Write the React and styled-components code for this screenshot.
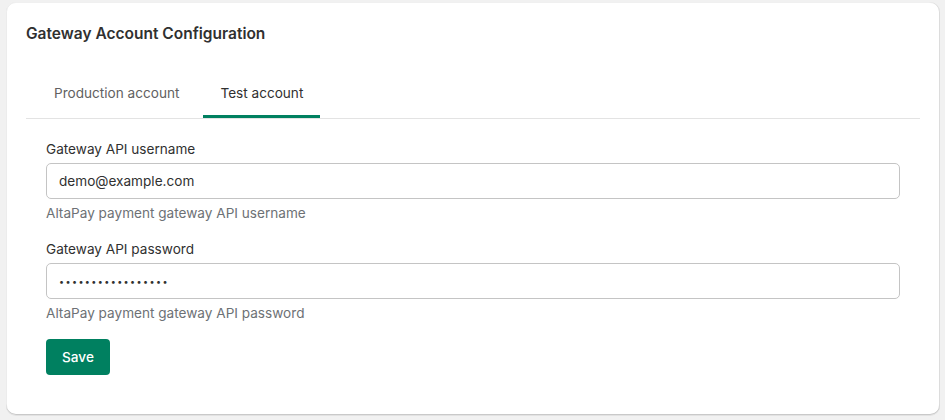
import React, { useState } from "react";
import styled, { createGlobalStyle } from "styled-components";

const Global = createGlobalStyle`
  html, body { margin: 0; padding: 0; background: #f1f1f1; }
  body { font-family: Inter, "Noto Sans", sans-serif; color: #303030; -webkit-font-smoothing: antialiased; }
  * { box-sizing: border-box; }
`;

const Page = styled.div`
  padding: 2px 5px 5px 6px;
  width: 945px;
  height: 420px;
`;

const Card = styled.section`
  background: #fff;
  border-radius: 10px;
  height: 413px;
  padding: 22px 20px 20px 20px;
  box-shadow: 0 1px 0 0 rgba(26, 26, 26, 0.07), inset 0 -1px 0 0 #c9c9c9,
    inset -1px 0 0 0 #dcdcdc, inset 1px 0 0 0 #ececec, inset 0 1px 0 0 #f0f0f0;
`;

const Title = styled.h2`
  margin: 0;
  font-size: 15.5px;
  line-height: 20px;
  font-weight: 600;
  color: #303030;
`;

const TabList = styled.div`
  margin-top: 23px;
  display: flex;
  gap: 7px;
  padding-left: 11px;
  border-bottom: 1px solid #e3e3e3;
`;

const Tab = styled.button`
  position: relative;
  height: 51px;
  padding: 0 17px;
  border: none;
  background: none;
  font-family: inherit;
  font-size: 13.6px;
  color: ${(p) => (p.$active ? "#303030" : "#616161")};
  cursor: pointer;
  &::after {
    content: "";
    position: absolute;
    left: 0;
    right: 0;
    bottom: 0;
    height: 3px;
    background: ${(p) => (p.$active ? "#008060" : "transparent")};
  }
`;

const Panel = styled.div`
  padding: 20px 20px 0 20px;
  display: flex;
  flex-direction: column;
  gap: 16px;
`;

const Field = styled.div`
  display: flex;
  flex-direction: column;
  gap: 4px;
`;

const Label = styled.label`
  font-size: 13.6px;
  line-height: 20px;
  color: #303030;
`;

const Input = styled.input`
  height: 36px;
  width: 100%;
  border: 1px solid #c4c4c4;
  border-radius: 5px;
  padding: 0 12px;
  font-family: inherit;
  font-size: 13.6px;
  color: #303030;
  outline: none;
  &[type="password"] {
    font-size: 9px;
    letter-spacing: 1.4px;
  }
`;

const Help = styled.div`
  font-size: 13.6px;
  line-height: 20px;
  color: #6d7175;
`;

const Actions = styled.div`
  display: flex;
`;

const SaveButton = styled.button`
  height: 36px;
  width: 64px;
  border: none;
  border-radius: 4px;
  background: #008060;
  color: #fff;
  font-family: inherit;
  font-size: 13.6px;
  font-weight: 500;
  cursor: pointer;
`;

export default function App() {
  const [tab, setTab] = useState("test");
  return (
    <Page>
      <Global />
      <Card>
        <Title>Gateway Account Configuration</Title>
        <TabList>
          <Tab $active={tab === "prod"} onClick={() => setTab("prod")}>
            Production account
          </Tab>
          <Tab $active={tab === "test"} onClick={() => setTab("test")}>
            Test account
          </Tab>
        </TabList>
        <Panel>
          <Field>
            <Label>Gateway API username</Label>
            <Input type="text" defaultValue="demo@example.com" />
            <Help>AltaPay payment gateway API username</Help>
          </Field>
          <Field>
            <Label>Gateway API password</Label>
            <Input type="password" defaultValue="demopassword12345" />
            <Help>AltaPay payment gateway API password</Help>
          </Field>
          <Actions>
            <SaveButton>Save</SaveButton>
          </Actions>
        </Panel>
      </Card>
    </Page>
  );
}
